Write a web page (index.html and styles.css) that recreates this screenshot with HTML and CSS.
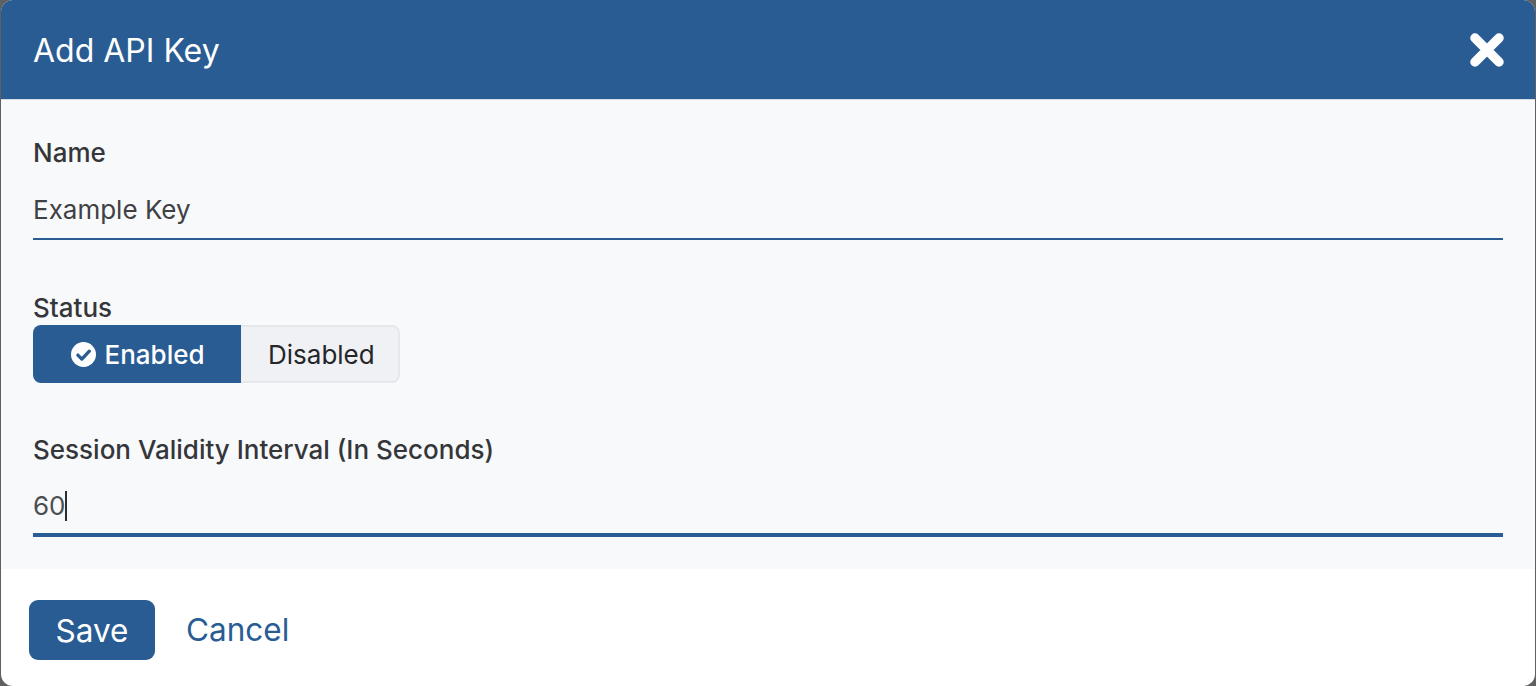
FILE: index.html
```html
<!DOCTYPE html>
<html lang="en">
  <head>
    <meta charset="UTF-8" />
    <meta name="viewport" content="width=device-width, initial-scale=1.0" />
    <title>Add API Key</title>
    <link rel="stylesheet" href="styles.css">
  </head>
  <body>
    <main class="modal">
      <header class="modal__header">
        <h1 class="modal__title">Add API Key</h1>
        <button class="modal__close" aria-label="Close">
          <svg viewBox="0 0 34 34" width="34" height="34">
            <path d="M5 5L29 29M29 5L5 29" stroke="#fff" stroke-width="9.5" stroke-linecap="round" fill="none" />
          </svg>
        </button>
      </header>
      <form class="modal__body">
        <div class="field field--name">
          <label class="field__label">Name</label>
          <div class="field__input">Example Key</div>
        </div>
        <div class="field field--status">
          <label class="field__label">Status</label>
          <div class="toggle">
            <span class="toggle__item toggle__item--on">
              <svg viewBox="0 0 24 24" width="25" height="25">
                <circle cx="12" cy="12" r="12" fill="#fff" />
                <path d="M6.6 12.6L10.4 16.4L17.6 8.8" stroke="#295c93" stroke-width="3.2" stroke-linecap="round" stroke-linejoin="round" fill="none" />
              </svg>
              Enabled
            </span>
            <span class="toggle__item">Disabled</span>
          </div>
        </div>
        <div class="field field--session">
          <label class="field__label">Session Validity Interval (In Seconds)</label>
          <div class="field__input field__input--focus">60<span class="caret"></span></div>
        </div>
      </form>
      <footer class="modal__footer">
        <button class="btn-save">Save</button>
        <a class="link-cancel">Cancel</a>
      </footer>
    </main>
  </body>
</html>
```

FILE: styles.css
```css
* {
  margin: 0;
  padding: 0;
  box-sizing: border-box;
}

html,
body {
  height: 100%;
  overflow: hidden;
}

body {
  font-family: Inter, "Liberation Sans", sans-serif;
  color: #2b2d30;
  background-color: #5f6062;
}

.modal {
  height: 686px;
  margin: 0 1px;
  display: flex;
  flex-direction: column;
  background-color: #fff;
  border-radius: 12px;
  overflow: hidden;
}

.modal__header {
  height: 100px;
  padding: 1px 31px 0 32px;
  display: flex;
  align-items: center;
  justify-content: space-between;
  color: #fff;
  background-color: #295c93;
  border-bottom: 1px solid #d5dde7;
}

.modal__title {
  font-size: 32px;
  font-weight: 400;
}

.modal__close {
  display: flex;
  border: none;
  background: none;
}

.modal__body {
  height: 469px;
  padding: 0 32px;
  background-color: #f8f9fb;
}

.field__label {
  display: block;
  font-size: 26px;
  line-height: 30px;
  font-weight: 500;
  color: #34363a;
}

.field--name {
  padding-top: 38px;
}

.field--status {
  padding-top: 53px;
}

.field--status .field__label {
  margin-bottom: 2px;
}

.field--session {
  padding-top: 52px;
}

.field__input {
  height: 72px;
  padding-top: 27px;
  font-size: 26px;
  line-height: 30px;
  color: #3f4145;
  border-bottom: 2px solid #295c93;
}

.field__input--focus {
  padding-top: 26px;
  color: #4b4e52;
  border-bottom-width: 4px;
}

.caret {
  display: inline-block;
  width: 2px;
  height: 30px;
  margin-left: -1px;
  vertical-align: -6px;
  background-color: #2b2d30;
}

.toggle {
  display: flex;
  width: max-content;
}

.toggle__item {
  height: 58px;
  padding: 0 23px 0 27px;
  display: flex;
  align-items: center;
  font-size: 26px;
  color: #24262a;
  background-color: #f0f1f4;
  border: 2px solid #e6e7ea;
  border-left: none;
  border-radius: 0 8px 8px 0;
}

.toggle__item--on {
  width: 208px;
  padding: 0 0 0 2px;
  gap: 8px;
  justify-content: center;
  font-weight: 500;
  color: #fff;
  background-color: #295c93;
  border: none;
  border-radius: 8px 0 0 8px;
}

.modal__footer {
  flex: 1;
  padding: 31px 28px 0;
  display: flex;
  align-items: flex-start;
  gap: 31px;
}

.btn-save {
  width: 126px;
  height: 60px;
  font-family: inherit;
  font-size: 31.5px;
  color: #fff;
  background-color: #295c93;
  border: none;
  border-radius: 9px;
}

.link-cancel {
  font-size: 31.5px;
  line-height: 60px;
  color: #295c93;
}
```
